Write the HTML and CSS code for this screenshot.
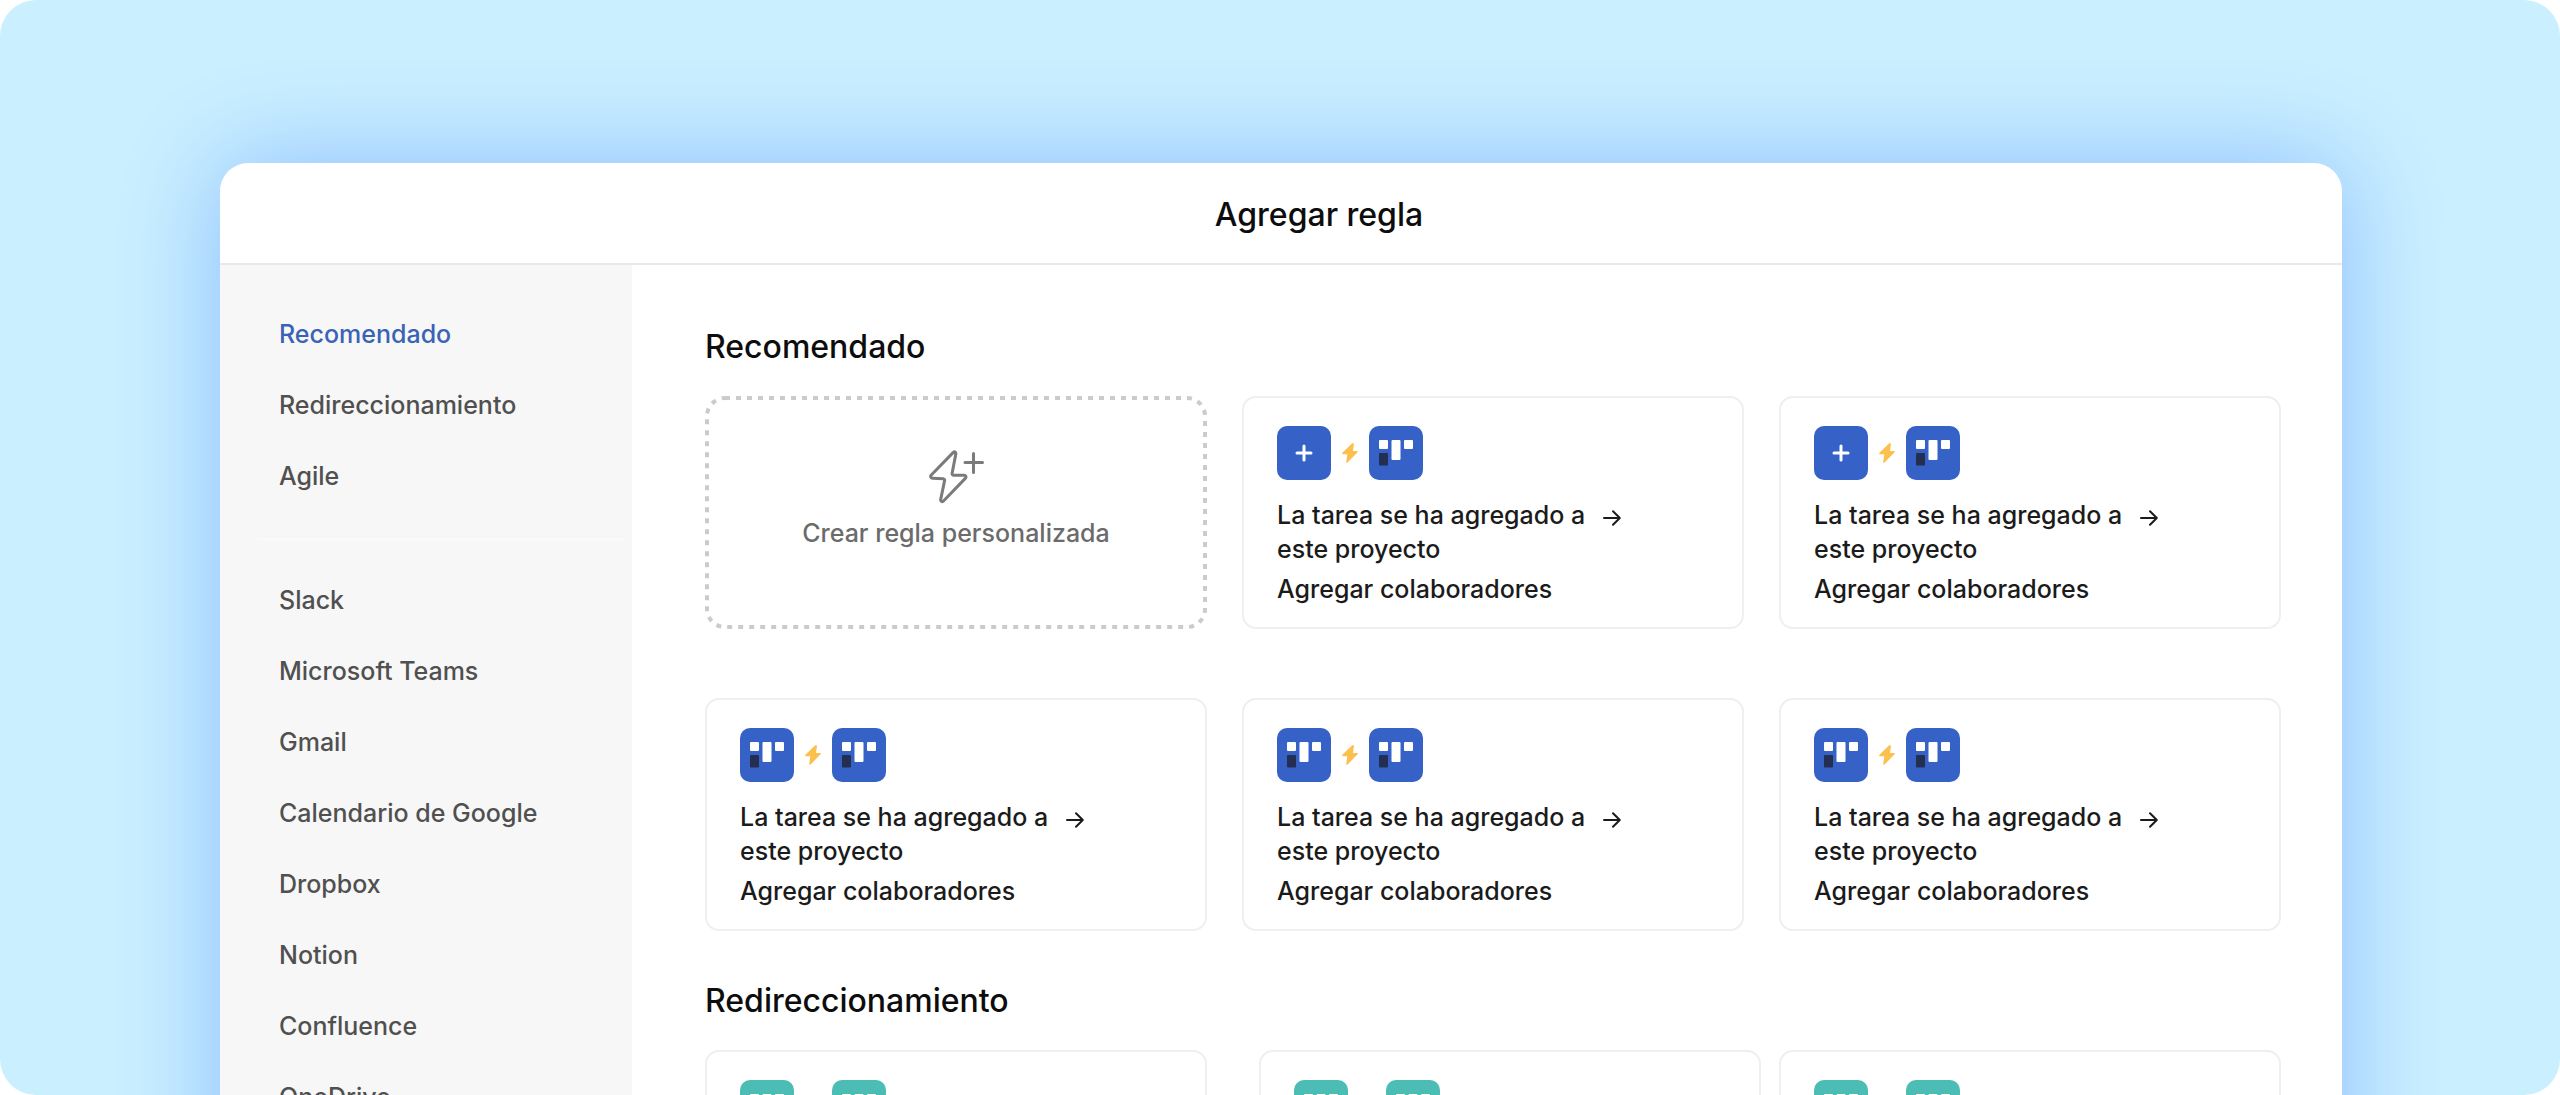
FILE: index.html
```html
<!DOCTYPE html>
<html lang="es">
<head>
    <meta charset="UTF-8">
    <meta name="viewport" content="width=device-width, initial-scale=1">
    <title>Agregar regla</title>
    <link rel="stylesheet" href="styles.css">
</head>

<body>
    <!-- shared icons -->
    <svg class="sprite" aria-hidden="true">
        <symbol id="icon-plus" viewBox="0 0 54 54">
            <rect width="54" height="54" rx="10" fill="#3661c7"/>
            <path d="M27 20v14M20 27h14" stroke="#fff" stroke-width="3" stroke-linecap="round"/>
        </symbol>
        <symbol id="icon-board" viewBox="0 0 54 54">
            <rect width="54" height="54" rx="10" fill="#3661c7"/>
            <rect x="10" y="14" width="9" height="9" rx="1" fill="#fff"/>
            <rect x="22.5" y="14" width="9" height="20" rx="1" fill="#fff"/>
            <rect x="35" y="14" width="9" height="9" rx="1" fill="#fff"/>
            <rect x="10" y="27" width="9" height="12.5" rx="1" fill="#232e50"/>
        </symbol>
        <symbol id="icon-board-green" viewBox="0 0 54 54">
            <rect width="54" height="54" rx="10" fill="#4bbdb4"/>
            <rect x="10" y="14" width="9" height="9" rx="1" fill="#fff"/>
            <rect x="22.5" y="14" width="9" height="20" rx="1" fill="#fff"/>
            <rect x="35" y="14" width="9" height="9" rx="1" fill="#fff"/>
        </symbol>
        <symbol id="icon-bolt" viewBox="0 0 16 20">
            <path d="M10.5 1 1 10.4h5.2L5 19l10-10.2H10L11.2 1z" fill="#fbc04d" stroke="#fbc04d" stroke-width="1.6" stroke-linejoin="round"/>
        </symbol>
        <symbol id="icon-arrow" viewBox="0 0 20 18">
            <path d="M2 9h15.5M11 2.2 17.8 9 11 15.8" fill="none" stroke="#1b1b1b" stroke-width="2" stroke-linecap="round" stroke-linejoin="round"/>
        </symbol>
    </svg>

    <div class="stage">
        <main class="dialog">
            <header class="dialog-header">
                <h1>Agregar regla</h1>
            </header>
            <div class="dialog-body">
                <nav class="sidebar">
                    <ul>
                        <li><a class="active" href="#recomendado">Recomendado</a></li>
                        <li><a href="#redireccionamiento">Redireccionamiento</a></li>
                        <li><a href="#agile">Agile</a></li>
                    </ul>
                    <hr>
                    <ul>
                        <li><a href="#slack">Slack</a></li>
                        <li><a href="#teams">Microsoft Teams</a></li>
                        <li><a href="#gmail">Gmail</a></li>
                        <li><a href="#calendario">Calendario de Google</a></li>
                        <li><a href="#dropbox">Dropbox</a></li>
                        <li><a href="#notion">Notion</a></li>
                        <li><a href="#confluence">Confluence</a></li>
                        <li><a href="#onedrive">OneDrive</a></li>
                    </ul>
                </nav>

                <div class="content">
                    <section id="recomendado">
                        <h2>Recomendado</h2>
                        <div class="cards">
                            <button type="button" class="card card-custom">
                                <svg class="outline" aria-hidden="true"><rect x="2" y="2" rx="18"/></svg>
                                <svg class="bolt-plus" viewBox="0 0 55 54" aria-hidden="true">
                                    <path d="M24.3 2.4 2.3 25c-1.3 1.4-.5 3.2 1.3 3.2l10.6.5c1.1.1 1.6.9 1.4 1.9l-3.9 18.8c-.3 1.9 1.5 2.9 2.8 1.6L36.3 28.4c1.3-1.4.6-3.2-1.3-3.2H24.8c-1.2 0-1.9-.8-1.7-1.9l3.7-19.2c.3-2-1.2-3.1-2.5-1.7z" fill="none" stroke="#7b7b7b" stroke-width="3" stroke-linejoin="round"/>
                                    <path d="M44.5 3.5v19M36 12.5h17.5" stroke="#7b7b7b" stroke-width="3" stroke-linecap="round"/>
                                </svg>
                                <span>Crear regla personalizada</span>
                            </button>
                            <button type="button" class="card">
                                <span class="icons">
                                    <svg class="app"><use href="#icon-plus"/></svg>
                                    <svg class="bolt"><use href="#icon-bolt"/></svg>
                                    <svg class="app"><use href="#icon-board"/></svg>
                                </span>
                                <span class="trigger">La tarea se ha agregado a <svg class="arrow"><use href="#icon-arrow"/></svg><br>este proyecto</span>
                                <span class="action">Agregar colaboradores</span>
                            </button>
                            <button type="button" class="card">
                                <span class="icons">
                                    <svg class="app"><use href="#icon-plus"/></svg>
                                    <svg class="bolt"><use href="#icon-bolt"/></svg>
                                    <svg class="app"><use href="#icon-board"/></svg>
                                </span>
                                <span class="trigger">La tarea se ha agregado a <svg class="arrow"><use href="#icon-arrow"/></svg><br>este proyecto</span>
                                <span class="action">Agregar colaboradores</span>
                            </button>
                            <button type="button" class="card">
                                <span class="icons">
                                    <svg class="app"><use href="#icon-board"/></svg>
                                    <svg class="bolt"><use href="#icon-bolt"/></svg>
                                    <svg class="app"><use href="#icon-board"/></svg>
                                </span>
                                <span class="trigger">La tarea se ha agregado a <svg class="arrow"><use href="#icon-arrow"/></svg><br>este proyecto</span>
                                <span class="action">Agregar colaboradores</span>
                            </button>
                            <button type="button" class="card">
                                <span class="icons">
                                    <svg class="app"><use href="#icon-board"/></svg>
                                    <svg class="bolt"><use href="#icon-bolt"/></svg>
                                    <svg class="app"><use href="#icon-board"/></svg>
                                </span>
                                <span class="trigger">La tarea se ha agregado a <svg class="arrow"><use href="#icon-arrow"/></svg><br>este proyecto</span>
                                <span class="action">Agregar colaboradores</span>
                            </button>
                            <button type="button" class="card">
                                <span class="icons">
                                    <svg class="app"><use href="#icon-board"/></svg>
                                    <svg class="bolt"><use href="#icon-bolt"/></svg>
                                    <svg class="app"><use href="#icon-board"/></svg>
                                </span>
                                <span class="trigger">La tarea se ha agregado a <svg class="arrow"><use href="#icon-arrow"/></svg><br>este proyecto</span>
                                <span class="action">Agregar colaboradores</span>
                            </button>
                        </div>
                    </section>

                    <section id="redireccionamiento">
                        <h2>Redireccionamiento</h2>
                        <div class="cards cards-routing">
                            <button type="button" class="card" aria-label="Regla de redireccionamiento">
                                <span class="icons">
                                    <svg class="app"><use href="#icon-board-green"/></svg>
                                    <svg class="bolt"><use href="#icon-bolt"/></svg>
                                    <svg class="app"><use href="#icon-board-green"/></svg>
                                </span>
                            </button>
                            <button type="button" class="card" aria-label="Regla de redireccionamiento">
                                <span class="icons">
                                    <svg class="app"><use href="#icon-board-green"/></svg>
                                    <svg class="bolt"><use href="#icon-bolt"/></svg>
                                    <svg class="app"><use href="#icon-board-green"/></svg>
                                </span>
                            </button>
                            <button type="button" class="card" aria-label="Regla de redireccionamiento">
                                <span class="icons">
                                    <svg class="app"><use href="#icon-board-green"/></svg>
                                    <svg class="bolt"><use href="#icon-bolt"/></svg>
                                    <svg class="app"><use href="#icon-board-green"/></svg>
                                </span>
                            </button>
                        </div>
                    </section>
                </div>
            </div>
        </main>
    </div>
</body>

</html>
```
FILE: styles.css
```css
*{margin: 0;padding: 0;box-sizing: border-box;}
body{
    background: #fff;
    color: #1b1b1b;
    font-family: Inter, "Liberation Sans", sans-serif;
    font-size: 25px;
    line-height: 34px;
}
ul{
    list-style: none;
}
.sprite{
    position: absolute;
    width: 0;
    height: 0;
}
.stage{
    height: 100vh;
    padding: 163px 218px 0 220px;
    background: #caefff;
    border-radius: 36px;
    overflow: hidden;
}

/* dialog */
.dialog{
    background: #fff;
    border-radius: 28px;
    box-shadow: 0 0 100px rgba(10, 83, 255, .32);
    overflow: hidden;
}
.dialog-header{
    padding: 32px 0 28px 76px;
    border-bottom: 2px solid #e9e9e9;
    text-align: center;
}
h1, h2{
    color: #0d0d0d;
    font-size: 32px;
    font-weight: 500;
    line-height: 40px;
}
.dialog-body{
    display: flex;
}

/* sidebar */
.sidebar{
    flex: 0 0 412px;
    padding-top: 34px;
    background: #f7f7f7;
}
.sidebar a{
    display: block;
    padding-left: 59px;
    color: #505050;
    font-weight: 500;
    line-height: 71px;
    text-decoration: none;
}
.sidebar a.active{
    color: #3a62b5;
}
.sidebar hr{
    height: 3px;
    margin: 26px 8px 24px 37px;
    border: 0;
    background: #fafafa;
}

/* rules */
.content{
    flex: 1;
    padding: 62px 61px 60px 73px;
}
.content section{
    margin-bottom: 50px;
}
h2{
    margin-bottom: 29px;
}
.cards{
    display: grid;
    grid-template-columns: repeat(3, 1fr);
    gap: 69px 35px;
}
.card{
    min-height: 233px;
    padding: 28px 33px 21px;
    background: #fff;
    border: 2px solid #efefef;
    border-radius: 14px;
    color: #1b1b1b;
    font: inherit;
    font-weight: 500;
    text-align: left;
    cursor: pointer;
    display: flex;
    flex-direction: column;
    align-items: flex-start;
}
.card-custom{
    position: relative;
    align-items: center;
    padding-top: 54px;
    border: 0;
    color: #6b6b6b;
}
.outline{
    position: absolute;
    top: 0;
    left: 0;
    width: 100%;
    height: 100%;
}
.outline rect{
    width: calc(100% - 4px);
    height: calc(100% - 4px);
    fill: none;
    stroke: #cbcbcb;
    stroke-width: 4px;
    stroke-dasharray: 5 6;
}
.bolt-plus{
    width: 55px;
    height: 54px;
    margin-bottom: 12px;
}
.icons{
    display: flex;
    align-items: center;
    gap: 11px;
    margin-bottom: 18px;
}
.app{
    width: 54px;
    height: 54px;
}
.bolt{
    width: 16px;
    height: 20px;
}
.arrow{
    width: 20px;
    height: 18px;
    margin-left: 10px;
    vertical-align: -3px;
}
.action{
    margin-top: 6px;
}
.cards-routing .card:nth-child(2){
    margin: 0 -17px 0 17px;
}
```
